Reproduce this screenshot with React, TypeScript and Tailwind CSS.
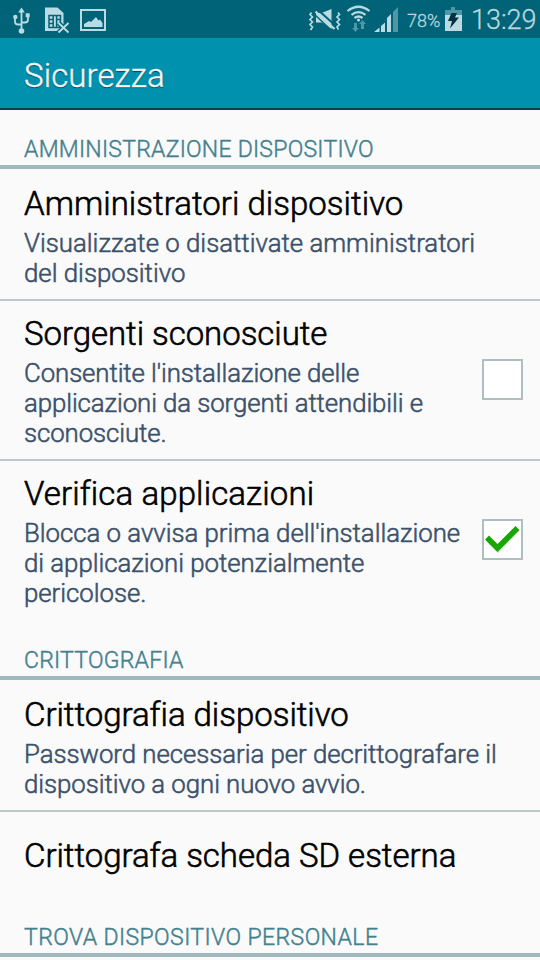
import type { ReactNode } from "react";

function StatusBar() {
  return (
    <div className="flex h-[38px] shrink-0 bg-[#006378] text-[#b9d8de]">
      <svg width="420" height="38" viewBox="0 0 420 38" className="w-[407px] shrink-0" preserveAspectRatio="xMinYMin slice">
        <g fill="none" stroke="#b9dbe1" strokeWidth="1.8">
          <path d="M21.5 12v18M15 17v4.500q0 3 3 3h3.500M28 16v3.500q0 3-3 3h-3.500" />
        </g>
        <g fill="#b9dbe1">
          <path d="M21.500 7.500l3.300 5h-6.600z" />
          <circle cx="21.500" cy="31" r="2.800" />
          <circle cx="15.300" cy="17" r="2.200" />
          <path d="M25.700 13.300h4v4h-4z" />
        </g>
        <path d="M45 7.500h12.500l6 5.500v18h-18.500z" fill="#b9dbe1" />
        <path d="M49 15.500h11.500v12h-11.500zM49 19.500h4M49 23.500h4M53.200 15.500v12M56.600 15.500v12M57 19.500h3.500" fill="none" stroke="#006378" strokeWidth="1.500" />
        <path d="M58.500 23l10 9.500M68.500 23l-10 9.500" stroke="#006378" strokeWidth="4.500" />
        <path d="M58.500 23l10 9.500M68.500 23l-10 9.500" stroke="#b9dbe1" strokeWidth="2" />
        <path d="M81 10h24v20h-24z" fill="none" stroke="#b9dbe1" strokeWidth="2" />
        <path d="M84 27v-3l5-3 2 1 5-5 2.500 3.500 1.500-1 2.500 3.500v4z" fill="#b9dbe1" />

        <path d="M316 13h5.500l10-4v20l-10-6.500h-5.500z" fill="#b9dbe1" />
        <path d="M317.500 9.500l19 17" stroke="#006378" strokeWidth="2" />
        <path d="M315.500 11.500l19 17.500" stroke="#b9dbe1" strokeWidth="2.200" />
        <path d="M313.500 13.500l17 16" stroke="#006378" strokeWidth="1.500" />
        <path d="M311.500 12.500l-1.500 2 2.500 2.500-2.500 2.500 2.500 2.500-2.500 2.500 2.500 2.500-2 3M338 12.500l1.500 2-2.500 2.500 2.500 2.500-2.500 2.500 2.500 2.500-2.500 2.500 1.500 2.500" fill="none" stroke="#b9dbe1" strokeWidth="1.700" />
        <g fill="none" stroke="#b9dbe1" strokeWidth="2.200">
          <path d="M347.500 11q11-8.500 22 0M351.500 14.800q7-5.500 14 0M354.500 18q4-3 8 0" />
        </g>
        <circle cx="358.500" cy="20" r="1.500" fill="#b9dbe1" />
        <path d="M354 23h3v5h2l-3.500 4-3.500-4h2zM361 29v-5h-2l3.500-4 3.500 4h-2v5z" fill="#4d97a6" />
        <path d="M374 32l5.500-4.500v4.500zM381 26l4-3.500v9.500h-4zM387 21l4-4v15h-4z" fill="#b9dbe1" />
        <path d="M387 18l4-4v18h-4z" fill="#b9dbe1" />
        <path d="M393 12l5-5v25h-5z" fill="#4d97a6" />
      </svg>
      <div className="w-[33px] shrink-0 whitespace-nowrap pt-[9px] text-[18px] font-light leading-6 [-webkit-text-stroke:0.3px_#b9d8de]">78%</div>
      <svg width="22" height="38" viewBox="0 0 22 38" className="ml-[3px] shrink-0">
        <path d="M2 10h6v-3h4v3h7v5h-17z" fill="#4d97a6" />
        <path d="M2 15h17v16h-17z" fill="#b9dbe1" />
        <path d="M8.500 13h5.500l-2 4.500h4l-9 11 2-7.500h-4z" fill="#003342" />
      </svg>
      <div className="ml-[6px] whitespace-nowrap pt-[4px] text-[27px] font-light leading-8 [-webkit-text-stroke:0.3px_#b9d8de]">13:29</div>
    </div>
  );
}

function Category({ children, className }: { children: ReactNode; className: string }) {
  return (
    <div className={`shrink-0 border-b-4 border-[#9fb9bf] pb-px pl-6 text-[23px] font-light leading-[28px] text-[#44818f] [-webkit-text-stroke:0.45px_#44818f] ${className}`}>
      {children}
    </div>
  );
}

function CheckBox({ checked }: { checked: boolean }) {
  return (
    <div className="mb-[4px] flex size-[41px] shrink-0 items-center justify-center border-2 border-[#b0bec1] bg-white">
      {checked && (
        <svg width="37" height="37" viewBox="0 0 37 37">
          <path d="M3.500 18l10.500 10.500 19.500-20.500" fill="none" stroke="#dce2dc" strokeWidth="5.500" />
          <path d="M3 16.500l10.500 10.500 20-20" fill="none" stroke="#16a800" strokeWidth="5.500" />
        </svg>
      )}
    </div>
  );
}

function Row({ title, lines, checked, className, titleClass = "", textClass = "" }: {
  title: string;
  lines: string[];
  checked?: boolean;
  className: string;
  titleClass?: string;
  textClass?: string;
}) {
  return (
    <div className={`flex shrink-0 items-center justify-between pl-6 pr-[17px] ${className}`}>
      <div className="whitespace-nowrap font-light">
        <div className={`text-[33px] leading-[40px] text-black [-webkit-text-stroke:0.6px_#000] ${titleClass}`}>{title}</div>
        {lines.length > 0 && (
          <div className={`mt-1 text-[25.8px] leading-[30px] text-[#3a516b] [-webkit-text-stroke:0.55px_#3a516b] ${textClass}`}>
            {lines.map((l) => (
              <div key={l}>{l}</div>
            ))}
          </div>
        )}
      </div>
      {checked !== undefined && <CheckBox checked={checked} />}
    </div>
  );
}

export default function App() {
  return (
    <div className="flex h-[960px] w-[540px] flex-col overflow-hidden bg-[#fafafa] font-['Roboto',sans-serif]">
      <StatusBar />
      <div className="flex h-[72px] shrink-0 items-center border-b-2 border-[#003f5c] bg-[#0091ae] pl-6 pt-[6px] text-[33px] font-light tracking-[0.1px] text-[#f5f5f5] [-webkit-text-stroke:0.4px_#f5f5f5] [text-shadow:0_1px_1px_#00404f]">
        Sicurezza
      </div>
      <Category className="pt-[26px] tracking-[0.25px]">AMMINISTRAZIONE DISPOSITIVO</Category>
      <Row title="Amministratori dispositivo" lines={["Visualizzate o disattivate amministratori", "del dispositivo"]} className="h-[132px] border-b-2 border-[#bcc8ce] pt-1" titleClass="tracking-[0.03px]" />
      <Row title="Sorgenti sconosciute" lines={["Consentite l'installazione delle", "applicazioni da sorgenti attendibili e", "sconosciute."]} checked={false} className="h-[160px] border-b-2 border-[#bcc8ce] pt-[2px]" titleClass="tracking-[-0.05px]" textClass="tracking-[-0.09px]" />
      <Row title="Verifica applicazioni" lines={["Blocca o avvisa prima dell'installazione", "di applicazioni potenzialmente", "pericolose."]} checked className="h-[158px] pt-[2px]" titleClass="tracking-[0.12px]" textClass="tracking-[-0.03px]" />
      <Category className="pt-[28px] tracking-[0.25px]">CRITTOGRAFIA</Category>
      <Row title="Crittografia dispositivo" lines={["Password necessaria per decrittografare il", "dispositivo a ogni nuovo avvio."]} className="h-[132px] border-b-2 border-[#bcc8ce] pt-1" titleClass="tracking-[-0.03px]" textClass="tracking-[-0.05px]" />
      <Row title="Crittografa scheda SD esterna" lines={[]} className="h-[88px]" titleClass="tracking-[-0.03px]" />
      <Category className="pt-[24px] tracking-[0.41px]">TROVA DISPOSITIVO PERSONALE</Category>
    </div>
  );
}
